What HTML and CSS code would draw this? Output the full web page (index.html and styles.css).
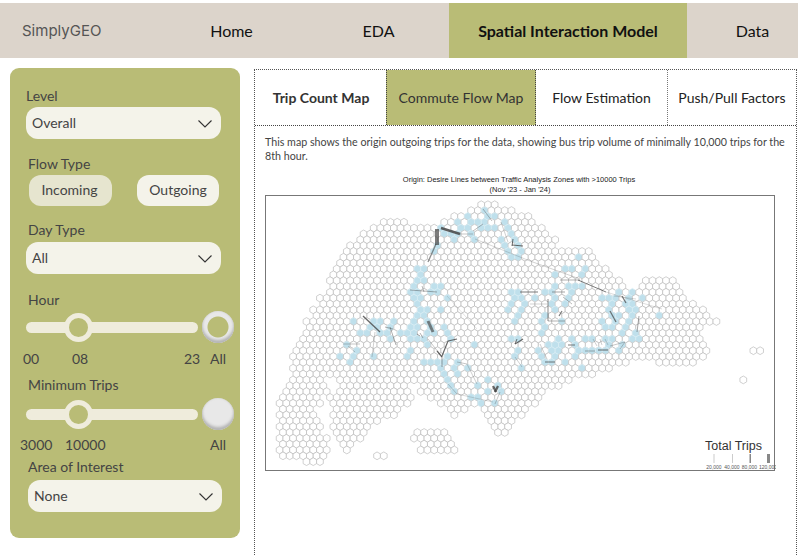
FILE: index.html
```html
<!DOCTYPE html>
<html lang="en">
<head>
<meta charset="utf-8">
<title>SimplyGEO</title>
<link rel="stylesheet" href="styles.css">
</head>
<body>
<nav class="nav">
  <div class="brand">SimplyGEO</div>
  <a class="nav-item nav-home">Home</a>
  <a class="nav-item nav-eda">EDA</a>
  <a class="nav-item nav-active">Spatial Interaction Model</a>
  <a class="nav-item nav-data">Data</a>
</nav>
<main class="main">
  <aside class="sidebar">
    <div class="label">Level</div>
    <div class="select"><span>Overall</span><svg class="chev" viewBox="0 0 14 8"><polyline points="0.5,0.5 7,7 13.5,0.5"/></svg></div>
    <div class="label label-flow">Flow Type</div>
    <div class="btns"><div class="btn btn-on">Incoming</div><div class="btn">Outgoing</div></div>
    <div class="label label-day">Day Type</div>
    <div class="select"><span>All</span><svg class="chev" viewBox="0 0 14 8"><polyline points="0.5,0.5 7,7 13.5,0.5"/></svg></div>
    <div class="label label-hour">Hour</div>
    <div class="slider-row">
      <div class="track"><div class="thumb"></div></div>
      <div class="toggle toggle-on"></div>
    </div>
    <div class="ticks ticks-hour"><span>00</span><span>08</span><span>23</span><span>All</span></div>
    <div class="label label-trips">Minimum Trips</div>
    <div class="slider-row">
      <div class="track"><div class="thumb"></div></div>
      <div class="toggle"></div>
    </div>
    <div class="ticks ticks-trips"><span>3000</span><span>10000</span><span>All</span></div>
    <div class="label label-area">Area of Interest</div>
    <div class="select select-area"><span>None</span><svg class="chev" viewBox="0 0 14 8"><polyline points="0.5,0.5 7,7 13.5,0.5"/></svg></div>
  </aside>
  <section class="panel">
    <div class="tabs">
      <div class="tab tab-first">Trip Count Map</div>
      <div class="tab tab-active">Commute Flow Map</div>
      <div class="tab tab-third">Flow Estimation</div>
      <div class="tab tab-fourth">Push/Pull Factors</div>
    </div>
    <p class="desc">This map shows the origin outgoing trips for the data, showing bus trip volume of minimally 10,000 trips for the 8th hour.</p>
    <svg id="map" class="map" viewBox="265 172 511 302" xmlns="http://www.w3.org/2000/svg">
      <text class="map-title" x="519" y="182.5" text-anchor="middle">Origin: Desire Lines between Traffic Analysis Zones with &gt;10000 Trips</text>
      <text class="map-title" x="520" y="193" text-anchor="middle">(Nov '23 - Jan '24)</text>
      <rect class="map-frame" x="265.5" y="196.5" width="509" height="275"/>
      <g id="hexes" class="soft"></g>
      <g id="flows" class="soft"></g>
      <text class="legend-title" x="705" y="450.5">Total Trips</text>
      <rect class="legend-bar" x="713.5" y="455" width="1" height="9"/>
      <rect class="legend-bar" x="732" y="455" width="1" height="9"/>
      <rect class="legend-bar legend-bar-mid" x="749.5" y="455" width="1.5" height="9"/>
      <rect class="legend-bar legend-bar-big" x="767" y="455" width="3" height="9"/>
      <text class="legend-tick" x="714" y="469.5" text-anchor="middle">20,000</text>
      <text class="legend-tick" x="732" y="469.5" text-anchor="middle">40,000</text>
      <text class="legend-tick" x="749.5" y="469.5" text-anchor="middle">80,000</text>
      <text class="legend-tick" x="768" y="469.5" text-anchor="middle">120,000</text>
    </svg>
  </section>
</main>
<script src="app.js"></script>
</body>
</html>
```
FILE: styles.css
```css
* { box-sizing: border-box; }
html, body { margin: 0; height: 555px; overflow: hidden; background: #fff; }
body { padding-top: 3px; font-family: "Lato", sans-serif; color: #444; }

.nav { display: flex; height: 55px; background: #dcd4cb; align-items: stretch; }
.brand { width: 155px; padding-left: 22px; font-family: "Inter", sans-serif; font-size: 15px; line-height: 55px; color: #555; }
.nav-item { display: flex; align-items: center; justify-content: center; font-size: 16px; color: #111; }
.nav-home { width: 153px; }
.nav-eda { width: 141px; }
.nav-active { width: 238px; background: #b9bc76; font-weight: 700; }
.nav-data { width: 111px; padding-left: 20px; }

.main { display: flex; align-items: flex-start; padding: 10px 1px 0 10px; gap: 14px; }

.sidebar { width: 230px; height: 470px; flex: none; background: #b9bc76; border-radius: 9px; padding: 20px 0 0 16px; }
.label { font-size: 14px; line-height: 15px; height: 17px; color: #444; margin-bottom: 2px; }
.label-flow { margin: 17px 0 2px 2px; }
.label-day { margin: 15px 0 4px 2px; line-height: 17px; }
.label-hour { margin: 18px 0 1px 2px; }
.label-trips { margin: 10px 0 3px 2px; }
.label-area { margin: 6px 0 4px 2px; }

.select { display: flex; align-items: center; justify-content: space-between; width: 195px; height: 32px; padding: 0 9px 1px 6px; background: #f4f3ea; border-radius: 12px; font-size: 14px; color: #444; }
.select-area { width: 194px; margin-left: 2px; }
.chev { width: 14px; height: 8px; margin-top: 2px; fill: none; stroke: #333; stroke-width: 1.1; }

.btns { display: flex; gap: 25px; margin-left: 3px; }
.btn { width: 83px; height: 31px; padding: 0 2px 3px 0; display: flex; align-items: center; justify-content: center; border-radius: 12px; background: #f4f3ea; font-size: 14px; color: #444; }
.btn + .btn { width: 82px; padding: 0 0 3px; }
.btn-on { background: #e6e5cf; }

.slider-row { display: flex; align-items: center; height: 34px; }
.track { position: relative; width: 172px; height: 11px; border-radius: 6px; background: #efecdc; }
.thumb { position: absolute; left: 38px; top: -9px; width: 29px; height: 29px; border-radius: 50%; background: #b9bc76; border: 5px solid #efecdc; }
.toggle { width: 32px; height: 32px; margin-left: 4px; border-radius: 50%; background: #e8e8e8; box-shadow: inset 0 -3px 3px #b4b4b4, inset 0 0 2px #ccc; }
.toggle-on { background: radial-gradient(circle at 50% 50%, #b9bc76 0 10px, #e8e8e8 11px); }

.ticks { display: grid; height: 17px; margin-top: 6px; font-size: 14px; line-height: 17px; color: #444; }
.ticks-hour { grid-template-columns: 49px 112px 26px 1fr; margin-left: -3px; }
.ticks-trips { grid-template-columns: 45px 145px 1fr; margin-left: -6px; margin-top: 5px; }

.panel { flex: 1; height: 490px; border: 1px dotted #555; border-bottom: 0; margin-top: 1px; }
.tabs { display: flex; height: 56px; border-bottom: 1px dotted #444; }
.tab { display: flex; align-items: center; justify-content: center; font-size: 14px; color: #222; }
.tab-first { width: 131px; font-weight: 700; color: #333; padding-left: 1px; }
.tab-active { width: 150px; background: #b9bc76; border-left: 1px dotted #444; border-right: 1px dotted #444; color: #333; }
.tab-third { width: 132px; border-right: 1px dotted #777; }
.tab-fourth { flex: 1; }

.desc { margin: 9px 4px 0 10px; font-size: 10.7px; line-height: 14px; color: #444; }
.map { display: block; width: 511px; height: 302px; margin: 8px 0 0 10px; }
.map-title { font-family: "Liberation Sans", sans-serif; font-size: 7.5px; fill: #222; }
.map-frame { fill: #fff; stroke: #777; stroke-width: 1; }
.legend-title { font-family: "Liberation Sans", sans-serif; font-size: 12.5px; fill: #333; }
.legend-tick { font-family: "Liberation Sans", sans-serif; font-size: 5px; fill: #555; }
.legend-bar { fill: #ccc; }
.legend-bar-mid { fill: #888; }
.legend-bar-big { fill: #888; }
.soft { filter: blur(0.3px); }
.hex { fill: #fff; stroke: #bcbcbc; stroke-width: 0.7; }
.hex-blue { fill: #bfe0ec; stroke: #d8ecf3; }
.flow { stroke: #444; fill: none; stroke-linecap: butt; }
```
FILE: app.js
```js
// Hex-grid map of zones and desire lines, drawn from data.
var NS = "http://www.w3.org/2000/svg";
var PX = 6.72, PY = 5.84, X0 = 474.5, Y0 = 205.7, R = PX / Math.sqrt(3);

var ROWS = [
 [[473,503]],[[465,520]],[[450,535]],[[380,407],[437,538]],[[366,545]],[[360,548]],[[353,558]],[[346,560]],
 [[340,592]],[[336,597]],[[333,602]],[[331,608]],[[330,612]],[[328,622],[643,677]],[[325,625],[640,680]],
 [[323,683]],[[316,687]],[[316,697]],[[310,707]],[[310,713]],[[303,720]],[[303,703]],[[300,703]],[[297,703]],
 [[293,708]],[[292,710],[750,765]],[[288,707]],[[288,633],[657,700]],[[285,612]],[[288,595]],
 [[290,325],[332,572],[741,747]],[[282,327],[337,407],[417,562]],[[278,330],[335,413],[417,548]],
 [[275,325],[328,416],[427,547]],[[275,323],[327,416],[437,537]],[[275,317],[330,403],[447,473],[480,533]],
 [[275,318],[330,397],[450,463],[480,527]],[[275,320],[330,380],[483,520]],[[275,323],[330,373],[487,513]],
 [[275,323],[332,367],[412,447],[493,510]],[[275,330],[337,363],[410,450]],[[275,330],[340,357],[417,453]],
 [[275,335],[343,350],[417,457]],[[278,330],[373,387]],[[302,323]]
];

// Blue zones, read as [x, y] offsets (3x) from the four map quadrants.
var BLUE = [
 { ox: 260, oy: 190, p: [[620,82],[585,99],[625,99],[645,99],[665,99],[675,64],[690,82],[705,82],[540,117],[600,117],[620,117],[660,117],[680,117],[705,117],[735,99],[735,117],[550,134],[570,134],[590,134],[630,134],[580,152],[640,152],[720,152],[750,134],[760,152],[730,169],[770,169],[735,187],[775,187],[745,204],[765,204],[520,187],[530,169],[470,239],[490,239],[480,257],[470,274],[490,274],[460,292],[530,292],[545,292],[450,309],[470,309],[510,309],[530,309],[560,327],[460,327],[480,327],[470,344],[480,362],[500,362],[540,362],[470,380],[490,380],[460,397],[500,397],[450,414],[470,414],[510,414],[550,414],[440,432],[460,432],[500,432],[520,432],[560,432],[450,449],[490,449],[580,449],[280,397],[340,397],[360,397],[410,397],[330,414],[350,414],[390,414],[300,432],[320,432],[360,432],[420,432],[780,309],[760,309],[760,344],[800,344],[770,327],[790,327],[750,362],[790,362],[780,380],[760,397]] },
 { ox: 260, oy: 330, p: [[300,12],[320,12],[360,12],[380,12],[420,12],[400,29],[260,47],[290,64],[280,82],[240,82],[340,82],[270,99],[450,64],[440,82],[450,29],[470,29],[490,29],[500,47],[560,82],[490,99],[510,99],[530,99],[550,99],[600,99],[540,117],[580,117],[620,117],[550,134],[590,134],[560,152],[680,152],[650,169],[710,169],[570,169],[580,187],[680,187],[720,187],[630,205],[650,205],[660,222],[700,222],[640,47],[750,29],[770,29],[770,64],[760,82],[780,117]] },
 { ox: 530, oy: 190, p: [[147,204],[105,239],[125,239],[165,239],[75,257],[155,257],[75,292],[135,292],[155,292],[115,292],[45,309],[65,309],[125,309],[268,309],[308,309],[85,327],[125,327],[15,327],[218,327],[238,327],[258,327],[298,327],[338,327],[60,344],[100,344],[250,344],[290,344],[310,344],[70,362],[240,362],[300,362],[320,362],[50,380],[250,380],[270,380],[310,380],[388,380],[35,397],[95,397],[215,397],[255,397],[295,397],[50,415],[230,415],[250,415],[290,415],[35,432],[280,432],[320,432]] },
 { ox: 530, oy: 330, p: [[35,12],[85,29],[125,29],[280,12],[320,12],[305,29],[328,29],[165,29],[185,29],[225,29],[245,29],[55,47],[75,47],[95,47],[135,47],[235,47],[275,47],[20,64],[65,64],[85,64],[145,64],[165,64],[185,64],[205,64],[225,64],[265,64],[30,82],[75,82],[135,82],[45,99],[65,99],[105,99],[155,117]] }
];

// x1, y1, x2, y2, width, opacity
var FLOWS = [
 [437,230,437,246,4,.7],[441,229,460,235,2.4,.85],[436,245,428,263,1.3,.6],[460,235,473,235,.5,.6],[473,232,483,225,.6,.6],[483,210,492,222,.6,.6],
 [513,240,512,247,1,.8],[512,246,523,247,1,.8],[501,223,508,243,.5,.5],[363,317,380,333,1.3,.8],[385,328,393,330,.6,.7],[390,328,396,346,.6,.7],
 [428,322,433,333,3,.65],[410,291,437,293,.7,.6],[422,287,424,293,.6,.6],[447,297,477,330,.5,.3],[475,240,530,262,.7,.3],[530,262,580,280,.7,.35],
 [578,281,606,293,1,.7],[606,293,662,310,.6,.3],[560,281,580,281,.7,.6],[622,297,626,304,1.3,.7],[610,312,616,323,1.3,.7],[548,300,548,322,.9,.7],[548,322,565,322,.8,.5],
 [562,312,559,317,1.2,.7],[520,293,538,293,1,.7],[552,293,565,293,.8,.6],[563,298,572,305,.6,.6],[530,305,547,305,.6,.4],[639,317,637,333,.8,.6],[614,297,636,300,.5,.4],
 [375,333,372,358,.5,.5],[343,345,360,345,.6,.5],[348,347,355,353,.5,.5],[428,340,442,358,.6,.5],[442,357,448,342,1.2,.8],[448,342,457,340,1.2,.8],[437,352,442,358,1.2,.8],[442,357,442,368,.8,.6],
 [457,363,467,365,.6,.5],[467,365,477,385,.5,.5],[448,385,457,395,.5,.5],[457,395,493,403,.5,.4],[493,387,496,393,2.2,.8],[498,387,495,393,2.2,.8],[500,393,495,405,.6,.5],
 [417,335,420,337,.8,.6],[420,334,423,339,.7,.6],[515,345,523,340,1.1,.8],[517,340,515,345,1,.7],[515,358,522,368,.5,.5],
 [540,345,547,360,.5,.5],[545,363,555,363,1,.7],[568,346,575,346,1,.7],[598,351,608,351,1.1,.7],[585,352,595,352,.8,.5],[610,347,625,343,.5,.6],[625,343,620,350,.5,.6],[593,340,597,347,.5,.5],[600,340,602,346,.5,.5],[605,340,608,346,.5,.5]
];

function el(name, attrs) {
  var n = document.createElementNS(NS, name);
  for (var k in attrs) n.setAttribute(k, attrs[k]);
  return n;
}
function centre(col, r) { return [X0 + col * PX + (r % 2 ? PX / 2 : 0), Y0 + r * PY]; }
function points(c) {
  var s = [];
  for (var i = 0; i < 6; i++) {
    var a = Math.PI / 6 + i * Math.PI / 3;
    s.push((c[0] + R * Math.cos(a)).toFixed(2) + "," + (c[1] + R * Math.sin(a)).toFixed(2));
  }
  return s.join(" ");
}

var blueSet = {};
BLUE.forEach(function (q) {
  q.p.forEach(function (pt) {
    var x = q.ox + pt[0] / 3, y = q.oy + pt[1] / 3;
    var r = Math.round((y - Y0) / PY);
    var col = Math.round((x - X0 - (r % 2 ? PX / 2 : 0)) / PX);
    blueSet[r + ":" + col] = true;
  });
});

var hexes = document.getElementById("hexes");
ROWS.forEach(function (spans, r) {
  spans.forEach(function (s) {
    var off = r % 2 ? PX / 2 : 0;
    var c0 = Math.ceil((s[0] + 2 - X0 - off) / PX), c1 = Math.floor((s[1] - 2 - X0 - off) / PX);
    for (var col = c0; col <= c1; col++) {
      hexes.appendChild(el("polygon", {
        points: points(centre(col, r)),
        "class": blueSet[r + ":" + col] ? "hex hex-blue" : "hex"
      }));
    }
  });
});

var flows = document.getElementById("flows");
FLOWS.forEach(function (f) {
  flows.appendChild(el("line", { x1: f[0], y1: f[1], x2: f[2], y2: f[3], "stroke-width": f[4], opacity: f[5], "class": "flow" }));
});
```
